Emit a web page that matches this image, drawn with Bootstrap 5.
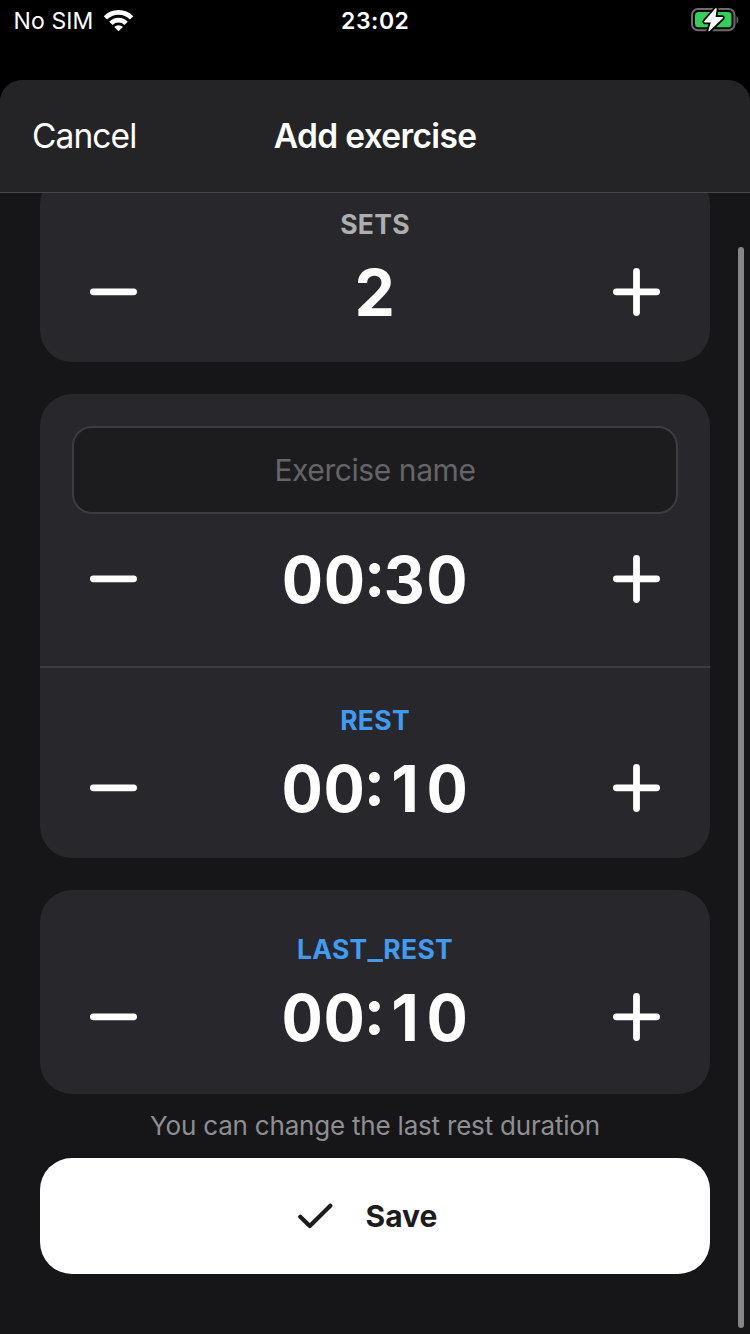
<!DOCTYPE html>
<html lang="en" data-bs-theme="dark">
<head>
<meta charset="utf-8">
<meta name="viewport" content="width=device-width, initial-scale=1">
<title>Add exercise</title>
<link href="https://cdn.jsdelivr.net/npm/bootstrap@5.3.0/dist/css/bootstrap.min.css" rel="stylesheet">
<style>
body{font-family:Inter,"Liberation Sans",sans-serif;background:#000;color:#fff;height:1334px;overflow:hidden}
.status-bar{height:80px;padding:0 11px 0 13.5px}
.status-bar>div{height:40px}
.carrier{font-size:23px;letter-spacing:.1px;padding-top:2px}
.clock{font-size:23px;font-weight:600;letter-spacing:.5px;padding-top:2px;padding-right:2px}
.sheet{height:1254px;background:#161618;border-radius:22px 22px 0 0}
.sheet-head{height:113px;background:#242426;border-bottom:1px solid #48484b;padding:0 32px;z-index:2}
.sheet-head .btn,.sheet-head h1{font-size:33.5px;line-height:112px}
.sheet-head .btn{color:#fff;letter-spacing:-.9px}
.sheet-head h1{font-weight:600;letter-spacing:-.65px}
.sheet-body{padding:0 40px;margin-top:-21px}
.panel{background:#28282c;border:0;border-radius:32px}
.sets-panel{padding:32px 50px 30px}
.timing-panel{margin:32px 0}
.work{padding:32px 50px 47px}
.rest{padding:32px 50px 30px;border-top:2px solid #3d3d41}
.last-rest{padding:39px 50px 37px}
.cap-label{font-size:26.5px;line-height:40px;font-weight:700;margin-bottom:8px;height:40px;letter-spacing:.3px}
.tone-muted{color:#aeaeb0}
.tone-blue{color:#409cf2}
.wide-mark{display:inline-block;transform:scaleX(1.22);margin:0 1.4px}
.stepper{height:80px}
.stepper .btn{line-height:0}
.value{font-size:64px;line-height:80px;font-weight:700;font-variant-numeric:tabular-nums;letter-spacing:.8px;padding-top:1px;height:80px}
.raised-colon{vertical-align:7px;line-height:0}
.narrow-one{display:inline-block;width:42.6px;font-variant-numeric:normal;text-align:center;letter-spacing:0}
.name-field{height:88px;margin:0 -18px 25px;width:606px;border:2px solid #3d3d41;border-radius:20px;background:#1c1c1e;font-size:30px;padding:0;letter-spacing:-.42px}
.name-field::placeholder{color:#656568;opacity:1}
.hint{font-size:26px;line-height:64px;color:#8e8e93;letter-spacing:-.2px;height:64px}
.save{height:116px;border-radius:32px;font-size:30px;font-weight:700;gap:33px;padding:1px 15px 0 0}
.save svg{margin-bottom:2px}
.save,.save:hover{background:#fff;color:#1c1c1e}
.scroll-thumb{right:6px;top:167px;width:6px;height:1081px;background:#868688}
</style>
</head>
<body>
<header class="status-bar"><div class="row g-0 align-items-center">
  <div class="col d-flex align-items-center"><span class="carrier">No SIM</span>
    <svg class="ms-2" width="34" height="25" viewBox="-.8 0 32 24" fill="none"><g stroke="#fff" stroke-width="4.5"><path d="M3.1 9.5a17.8 17.8 0 0 1 25.2 0"/><path d="M8.4 14.7a10.3 10.3 0 0 1 14.6 0"/></g><path fill="#fff" d="M11.5 18.2a6 6 0 0 1 8.4 0l-4.2 4.2z"/></svg></div>
  <div class="col-auto clock">23:02</div>
  <div class="col d-flex justify-content-end"><svg width="48" height="28" viewBox="0 0 48 28"><rect x="1" y="3" width="42.5" height="21.2" rx="6" fill="none" stroke="#6e6e70" stroke-width="2"/><path fill="#6e6e70" d="M45.6 10.2c2.2 1 2.2 6.2 0 7.2z"/><rect x="4" y="6" width="36.5" height="15.2" rx="3.5" fill="#30d158"/><g stroke-linejoin="round"><path d="M25 2.8 13.8 15.7h7L18 24.6 31.3 11.8h-7.6z" fill="#000" stroke="#000" stroke-width="5"/><path d="M25 2.8 13.8 15.7h7L18 24.6 31.3 11.8h-7.6z" fill="#fff" stroke="#fff" stroke-width="1.4"/></g></svg></div>
</div></header>
<main class="sheet position-relative overflow-hidden">
  <div class="sheet-head position-relative row g-0 align-items-center">
    <div class="col"><button class="btn p-0 border-0">Cancel</button></div>
    <h1 class="col-auto m-0">Add exercise</h1>
    <div class="col"></div>
  </div>
  <div class="sheet-body">
    <section class="card panel sets-panel text-center">
      <div class="cap-label tone-muted">SETS</div>
      <div class="stepper d-flex align-items-center justify-content-between">
        <button class="btn p-0 border-0" aria-label="Decrease"><svg width="47" height="48"><rect y="20.4" width="47" height="6.8" rx="3.4" fill="#fff"/></svg></button>
        <span class="value">2</span>
        <button class="btn p-0 border-0" aria-label="Increase"><svg width="47" height="48"><path fill="none" stroke="#fff" stroke-width="6.8" stroke-linecap="round" d="M3.4 23.8h40.2M23.5 3.4v41.2"/></svg></button>
      </div>
    </section>
    <section class="card panel timing-panel text-center">
      <div class="work">
        <input class="form-control name-field text-center" placeholder="Exercise name">
        <div class="stepper d-flex align-items-center justify-content-between">
          <button class="btn p-0 border-0" aria-label="Decrease"><svg width="47" height="48"><rect y="20.4" width="47" height="6.8" rx="3.4" fill="#fff"/></svg></button>
          <span class="value">00<span class="raised-colon">:</span>30</span>
          <button class="btn p-0 border-0" aria-label="Increase"><svg width="47" height="48"><path fill="none" stroke="#fff" stroke-width="6.8" stroke-linecap="round" d="M3.4 23.8h40.2M23.5 3.4v41.2"/></svg></button>
        </div>
      </div>
      <div class="rest">
        <div class="cap-label tone-blue">REST</div>
        <div class="stepper d-flex align-items-center justify-content-between">
          <button class="btn p-0 border-0" aria-label="Decrease"><svg width="47" height="48"><rect y="20.4" width="47" height="6.8" rx="3.4" fill="#fff"/></svg></button>
          <span class="value">00<span class="raised-colon">:</span><span class="narrow-one">1</span>0</span>
          <button class="btn p-0 border-0" aria-label="Increase"><svg width="47" height="48"><path fill="none" stroke="#fff" stroke-width="6.8" stroke-linecap="round" d="M3.4 23.8h40.2M23.5 3.4v41.2"/></svg></button>
        </div>
      </div>
    </section>
    <section class="card panel last-rest text-center">
      <div class="cap-label tone-blue">LAST<span class="wide-mark">_</span>REST</div>
      <div class="stepper d-flex align-items-center justify-content-between">
        <button class="btn p-0 border-0" aria-label="Decrease"><svg width="47" height="48"><rect y="20.4" width="47" height="6.8" rx="3.4" fill="#fff"/></svg></button>
        <span class="value">00<span class="raised-colon">:</span><span class="narrow-one">1</span>0</span>
        <button class="btn p-0 border-0" aria-label="Increase"><svg width="47" height="48"><path fill="none" stroke="#fff" stroke-width="6.8" stroke-linecap="round" d="M3.4 23.8h40.2M23.5 3.4v41.2"/></svg></button>
      </div>
    </section>
    <div class="hint text-center">You can change the last rest duration</div>
    <button class="btn save border-0 w-100 d-flex align-items-center justify-content-center"><svg width="35" height="26" viewBox="0 0 35 26" fill="none" stroke="#1c1c1e" stroke-width="4.2" stroke-linecap="round" stroke-linejoin="round"><path d="m2.3 13.7 9.5 9.3L32.3 2.8"/></svg>Save</button>
  </div>
  <div class="scroll-thumb position-absolute rounded-pill"></div>
</main>
<script src="https://cdn.jsdelivr.net/npm/bootstrap@5.3.0/dist/js/bootstrap.bundle.min.js"></script>
</body>
</html>
